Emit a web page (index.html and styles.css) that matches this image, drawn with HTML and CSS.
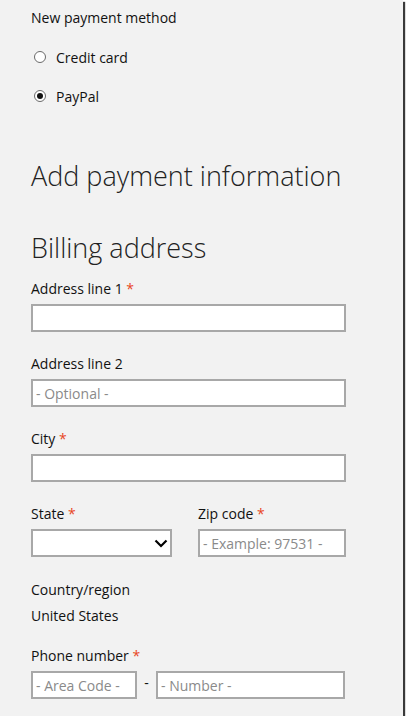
FILE: index.html
```html
<!DOCTYPE html>
<html lang="en">
<head>
  <meta charset="UTF-8" />
  <meta name="viewport" content="width=device-width, initial-scale=1.0"/>
  <title>Add payment information</title>
  <link rel="stylesheet" href="styles.css">
</head>
<body>

  <div class="panel">
    <div class="method-title">New payment method</div>

    <label class="radio-row">
      <span class="radio"></span>
      <span>Credit card</span>
    </label>
    <label class="radio-row">
      <span class="radio checked"></span>
      <span>PayPal</span>
    </label>

    <h1 class="heading">Add payment information</h1>
    <h2 class="heading billing">Billing address</h2>

    <div class="field">
      <div class="label">Address line 1 <span class="req">*</span></div>
      <input class="box full" type="text">
    </div>

    <div class="field">
      <div class="label">Address line 2</div>
      <input class="box full" type="text" placeholder="- Optional -">
    </div>

    <div class="field">
      <div class="label">City <span class="req">*</span></div>
      <input class="box full" type="text">
    </div>

    <div class="field-row">
      <div class="field">
        <div class="label">State <span class="req">*</span></div>
        <div class="box select">
          <svg width="14" height="9" viewBox="0 0 14 9">
            <path d="M1.5 1.5 L7 7 L12.5 1.5" fill="none" stroke="#000" stroke-width="2.2"/>
          </svg>
        </div>
      </div>
      <div class="field">
        <div class="label">Zip code <span class="req">*</span></div>
        <input class="box zip" type="text" placeholder="- Example: 97531 -">
      </div>
    </div>

    <div class="country">
      <div class="label">Country/region</div>
      <div class="label">United States</div>
    </div>

    <div class="field">
      <div class="label">Phone number <span class="req">*</span></div>
      <div class="phone">
        <input class="box area" type="text" placeholder="- Area Code -">
        <span class="dash">-</span>
        <input class="box number" type="text" placeholder="- Number -">
      </div>
    </div>
  </div>

</body>
</html>
```

FILE: styles.css
```css
* {
  box-sizing: border-box;
}

body {
  margin: 0;
  background: #fff;
  font-family: 'Open Sans', sans-serif;
  color: #111;
}

.panel {
  width: 403px;
  height: 716px;
  padding: 8px 0 0 31px;
  background: #f2f2f2;
  box-shadow: 2px 2px 1px #3a3a3a;
  overflow: hidden;
}

.method-title,
.label {
  font-size: 14px;
  line-height: 20px;
}

.req {
  color: #e8461e;
}

.radio-row {
  display: flex;
  align-items: center;
  gap: 10px;
  height: 20px;
  margin-top: 19px;
  font-size: 14px;
  padding-left: 3px;
}

.radio {
  width: 12px;
  height: 12px;
  border: 1px solid #6a6a6a;
  border-radius: 50%;
  background: #fff;
  position: relative;
}

.radio.checked::after {
  content: "";
  position: absolute;
  top: 2px;
  left: 2px;
  width: 6px;
  height: 6px;
  border-radius: 50%;
  background: #111;
}

.heading {
  margin: 52px 0 0;
  font-size: 27px;
  line-height: 36px;
  font-weight: 300;
  color: #222;
}

.heading.billing {
  margin-top: 36px;
  margin-bottom: 13px;
}

.field {
  display: flex;
  flex-direction: column;
  gap: 5px;
  margin-bottom: 22px;
}

.box {
  height: 28px;
  border: 2px solid #a8a8a8;
  background: #fff;
  font-family: inherit;
  font-size: 14px;
  padding: 0 3px;
  outline: none;
}

.box::placeholder {
  color: #8a8a8a;
}

.full {
  width: 315px;
}

.field-row {
  display: flex;
  gap: 26px;
  margin-bottom: 1px;
}

.select {
  width: 141px;
  display: flex;
  align-items: center;
  justify-content: flex-end;
  padding-right: 2px;
}

.zip {
  width: 148px;
}

.country {
  display: flex;
  flex-direction: column;
  gap: 6px;
  margin-bottom: 20px;
}

.phone {
  display: flex;
  align-items: center;
}

.area {
  width: 106px;
}

.dash {
  width: 19px;
  text-align: center;
  font-size: 14px;
  margin-top: -6px;
}

.number {
  width: 189px;
}
```
